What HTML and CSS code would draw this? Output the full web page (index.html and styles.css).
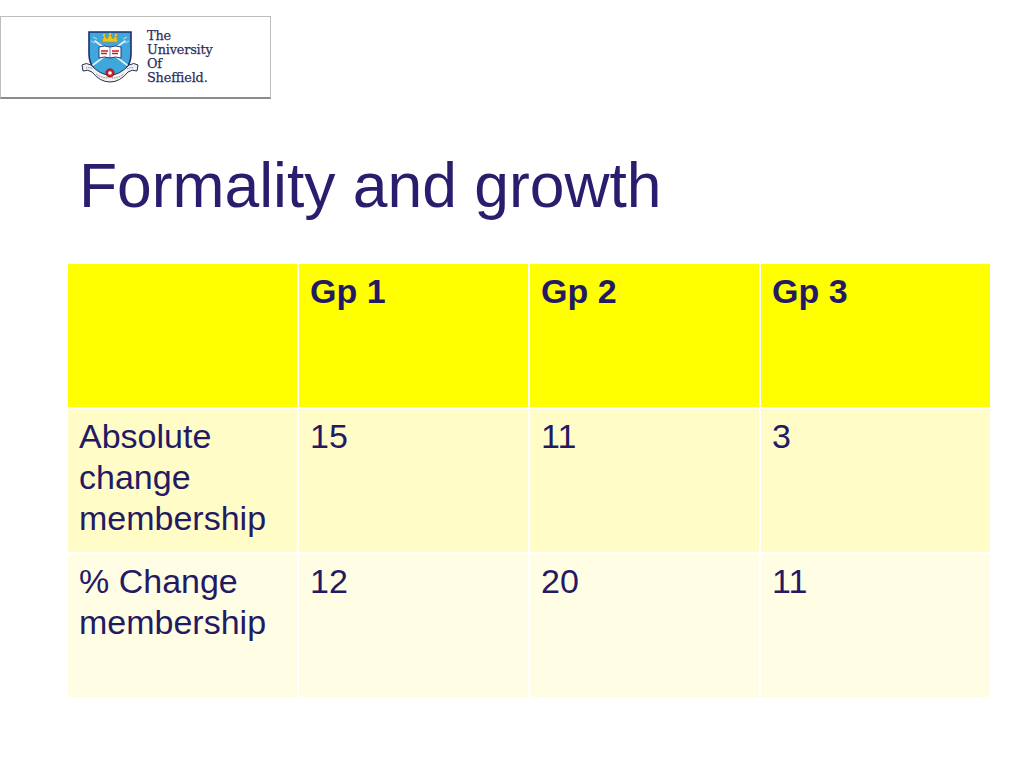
FILE: index.html
```html
<!DOCTYPE html>
<html lang="en">
<head>
<meta charset="utf-8">
<title>Formality and growth</title>
<link rel="stylesheet" href="styles.css">
</head>
<body>
<header class="logo">
  <svg class="crest" viewBox="0 0 60 56" width="60" height="56" aria-hidden="true">
    <path d="M9 3 H51 V25 C51 38 42 46 30 51 C18 46 9 38 9 25 Z" fill="#3ea8dd" stroke="#1f2d6b" stroke-width="1.6"/>
    <g stroke="#e8eef5" stroke-width="1.6" stroke-linecap="round">
      <line x1="13" y1="36" x2="45" y2="12"/>
      <line x1="47" y1="36" x2="15" y2="12"/>
    </g>
    <g stroke="#cfd8e6" stroke-width="1" fill="none">
      <path d="M43 10 l4 -2 M45 14 l4 -2"/>
      <path d="M17 10 l-4 -2 M15 14 l-4 -2"/>
    </g>
    <path d="M22 13 L24 6 L27 10 L30 5 L33 10 L36 6 L38 13 Z" fill="#f2c318" stroke="#b38a00" stroke-width="0.6"/>
    <circle cx="24" cy="6" r="1.2" fill="#f2c318"/>
    <circle cx="30" cy="5" r="1.2" fill="#f2c318"/>
    <circle cx="36" cy="6" r="1.2" fill="#f2c318"/>
    <path d="M19 18 Q24.5 16 30 18 Q35.5 16 41 18 V29 Q35.5 27 30 29 Q24.5 27 19 29 Z" fill="#ffffff" stroke="#1f2d6b" stroke-width="0.9"/>
    <line x1="30" y1="18" x2="30" y2="29" stroke="#1f2d6b" stroke-width="0.6"/>
    <path d="M21 22 h7 M21 24.5 h6 M32 22 h7 M32 24.5 h6" stroke="#c8202a" stroke-width="1.3"/>
    <path d="M2 36 Q6 33 11 36 Q20 46 30 46 Q40 46 49 36 Q54 33 58 36 L57 42 Q52 40 48 43 Q40 53 30 53 Q20 53 12 43 Q8 40 3 42 Z" fill="#f1f1ee" stroke="#2a2f55" stroke-width="1"/>
    <path d="M6 39 Q10 38 13 40 M16 45 q6 4 12 4 M32 49 q7 0 12 -4 M47 40 q3 -2 7 -1" stroke="#555a70" stroke-width="0.8" fill="none" stroke-dasharray="1 0.8"/>
    <circle cx="30" cy="44" r="4.2" fill="#c8202a" stroke="#6b1010" stroke-width="0.6"/>
    <circle cx="30" cy="44" r="1.8" fill="#ffffff"/>
  </svg>
  <div class="uni">The<br>University<br>Of<br>Sheffield.</div>
</header>

<h1 class="title">Formality and growth</h1>

<div class="table">
  <div class="cell head"></div>
  <div class="cell head">Gp 1</div>
  <div class="cell head">Gp 2</div>
  <div class="cell head">Gp 3</div>

  <div class="cell odd">Absolute change membership</div>
  <div class="cell odd">15</div>
  <div class="cell odd">11</div>
  <div class="cell odd">3</div>

  <div class="cell even">% Change membership</div>
  <div class="cell even">12</div>
  <div class="cell even">20</div>
  <div class="cell even">11</div>
</div>
</body>
</html>
```

FILE: styles.css
```css
html, body {
  margin: 0;
  padding: 0;
  background: #ffffff;
}

body {
  font-family: "Liberation Sans", Arial, sans-serif;
  color: #261b68;
}

.logo {
  box-sizing: border-box;
  margin-top: 16px;
  width: 271px;
  height: 83px;
  border: 1px solid #bdbdbd;
  border-bottom: 2px solid #8c8c8c;
  display: flex;
  align-items: center;
  gap: 7px;
  padding-left: 79px;
  background: #ffffff;
}

.crest {
  display: block;
  flex: none;
}

.uni {
  font-family: "DejaVu Serif", "Liberation Serif", serif;
  font-size: 12.8px;
  line-height: 14px;
  color: #2e2e5c;
  -webkit-text-stroke: 0.25px #2e2e5c;
  letter-spacing: -0.15px;
}

.title {
  margin: 51px 0 43px 79px;
  font-size: 62.4px;
  line-height: 71px;
  font-weight: normal;
  color: #2a1d6e;
}

.table {
  margin-left: 68px;
  width: 922px;
  display: grid;
  grid-template-columns: repeat(4, 1fr);
  grid-auto-rows: 143px;
  column-gap: 2px;
  row-gap: 2px;
}

.cell {
  box-sizing: border-box;
  padding: 7px 10px 0 11px;
  font-size: 34px;
  line-height: 41px;
  color: #241a64;
}

.head {
  background: #ffff00;
  font-weight: bold;
}

.odd {
  background: #fffcc8;
}

.even {
  background: #fffee4;
}
```
